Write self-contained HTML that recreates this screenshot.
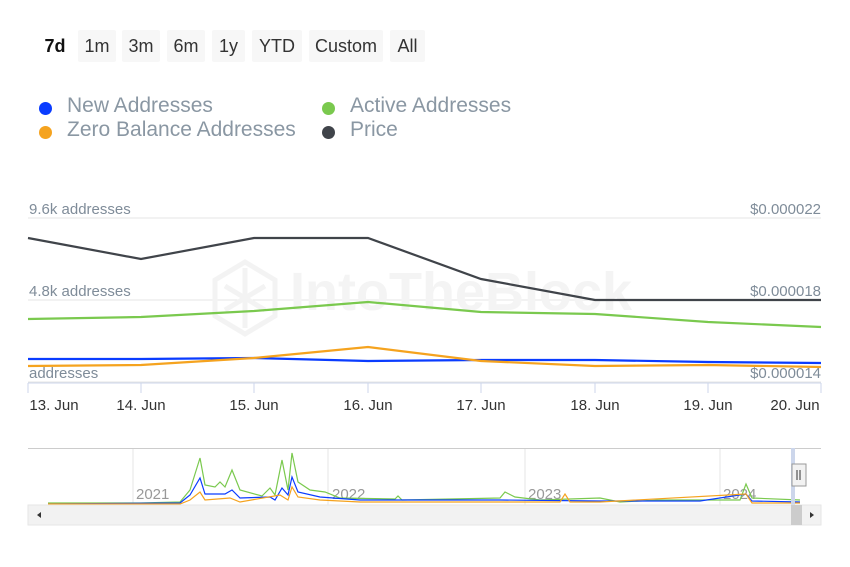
<!DOCTYPE html><html><head><style>
body{margin:0;width:850px;height:567px;background:#fff;font-family:"Liberation Sans",sans-serif;position:relative;overflow:hidden}
.b{position:absolute;top:30px;height:32px;line-height:32px;background:#f7f7f7;border-radius:2px;font-size:18px;color:#333;text-align:center}
.l{position:absolute;font-size:21px;color:#8a97a3}
.d{position:absolute;width:13px;height:13px;border-radius:50%}
</style></head><body>
<div class="b" style="left:40px;width:30px;background:none;font-weight:bold;color:#111">7d</div>
<div class="b" style="left:78px;width:38px">1m</div>
<div class="b" style="left:122px;width:38px">3m</div>
<div class="b" style="left:167px;width:38px">6m</div>
<div class="b" style="left:212px;width:33px">1y</div>
<div class="b" style="left:252px;width:50px">YTD</div>
<div class="b" style="left:309px;width:74px">Custom</div>
<div class="b" style="left:390px;width:35px">All</div>
<div class="d" style="left:39px;top:102px;background:#0a3cff"></div><div class="l" style="left:67px;top:94px">New Addresses</div>
<div class="d" style="left:39px;top:126px;background:#f5a31f"></div><div class="l" style="left:67px;top:118px">Zero Balance Addresses</div>
<div class="d" style="left:322px;top:102px;background:#7ac94e"></div><div class="l" style="left:350px;top:94px">Active Addresses</div>
<div class="d" style="left:322px;top:126px;background:#40444a"></div><div class="l" style="left:350px;top:118px">Price</div>
<svg width="850" height="567" style="position:absolute;left:0;top:0" font-family="Liberation Sans, sans-serif">
<g stroke="#e6e6e6"><line x1="28" y1="218" x2="821" y2="218"/><line x1="28" y1="300" x2="821" y2="300"/><line x1="28" y1="382" x2="821" y2="382"/></g>
<g fill="none" stroke="#f3f3f3" stroke-width="5"><polygon points="245,262 275,280 275,316 245,334 215,316 215,280"/><path d="M225 286 L265 310 M225 310 L265 286 M245 268 L245 328"/></g>
<text x="290" y="310" font-size="54" font-weight="bold" fill="#f4f4f4">IntoTheBlock</text>
<g font-size="15" fill="#7f8c99"><text x="29" y="214">9.6k addresses</text><text x="29" y="296">4.8k addresses</text><text x="29" y="378">addresses</text>
<text x="821" y="214" text-anchor="end">$0.000022</text><text x="821" y="296" text-anchor="end">$0.000018</text><text x="821" y="378" text-anchor="end">$0.000014</text></g>
<line x1="28" y1="383" x2="821" y2="383" stroke="#ccd6eb"/>
<g stroke="#ccd6eb"><line x1="28" y1="383" x2="28" y2="393"/><line x1="141" y1="383" x2="141" y2="393"/><line x1="254" y1="383" x2="254" y2="393"/><line x1="368" y1="383" x2="368" y2="393"/><line x1="481" y1="383" x2="481" y2="393"/><line x1="595" y1="383" x2="595" y2="393"/><line x1="708" y1="383" x2="708" y2="393"/><line x1="821" y1="383" x2="821" y2="393"/></g>
<g font-size="15" fill="#333" text-anchor="middle"><text x="54" y="410">13. Jun</text><text x="141" y="410">14. Jun</text><text x="254" y="410">15. Jun</text><text x="368" y="410">16. Jun</text><text x="481" y="410">17. Jun</text><text x="595" y="410">18. Jun</text><text x="708" y="410">19. Jun</text><text x="795" y="410">20. Jun</text></g>
<g fill="none" stroke-width="2.2">
<polyline stroke="#40444a" points="28,238 141,259 254,238 368,238 481,279 595,300 708,300 821,300"/>
<polyline stroke="#7ac94e" points="28,319 141,317 254,311 368,302 481,312 595,314 708,322 821,327"/>
<polyline stroke="#0a3cff" points="28,359 141,359 254,358 368,361 481,360 595,360 708,362 821,363"/>
<polyline stroke="#f5a31f" points="28,366 141,365 254,358 368,347 481,361 595,366 708,365 821,367"/>
</g>
<line x1="28" y1="448.5" x2="821" y2="448.5" stroke="#ccc"/>
<g stroke="#e6e6e6"><line x1="133" y1="449" x2="133" y2="505"/><line x1="328" y1="449" x2="328" y2="505"/><line x1="525" y1="449" x2="525" y2="505"/><line x1="720" y1="449" x2="720" y2="505"/></g>
<g font-size="15" fill="#999"><text x="136" y="499">2021</text><text x="332" y="499">2022</text><text x="528" y="499">2023</text><text x="723" y="499">2024</text></g>
<g fill="none" stroke-width="1.2">
<polyline stroke="#7ac94e" points="48,503 140,503 180,502 190,490 200,458 205,485 215,487 220,482 225,487 232,470 240,490 262,496 270,488 275,495 282,460 288,490 292,453 298,482 310,490 325,492 340,498 395,499 398,496 402,500 500,498 505,492 515,497 540,500 600,498 620,502 660,500 700,500 740,500 746,484 752,498 800,500"/>
<polyline stroke="#0a3cff" points="48,504 180,503 190,495 200,478 205,494 215,494 225,494 232,490 240,498 270,497 275,500 282,488 288,495 292,477 298,492 320,497 360,500 500,500 600,501 700,501 746,494 752,501 800,502"/>
<polyline stroke="#f5a31f" points="48,504 180,504 190,500 200,492 205,500 230,498 240,502 280,495 288,500 292,487 298,497 320,500 360,502 560,502 565,494 570,502 600,502 746,494 752,503 800,503"/>
</g>
<rect x="791" y="448" width="4" height="57" fill="#ccd6eb"/>
<rect x="792" y="464" width="14" height="22" fill="#f2f2f2" stroke="#999"/>
<line x1="797" y1="470" x2="797" y2="480" stroke="#333"/><line x1="800" y1="470" x2="800" y2="480" stroke="#333"/>
<rect x="28" y="505" width="793" height="20" fill="#f2f2f2" stroke="#e6e6e6"/>
<rect x="791" y="505" width="11" height="20" fill="#ccc"/>
<path d="M41 512 L37 515 L41 518Z" fill="#333"/><path d="M810 512 L814 515 L810 518Z" fill="#333"/>
</svg>
</body></html>
